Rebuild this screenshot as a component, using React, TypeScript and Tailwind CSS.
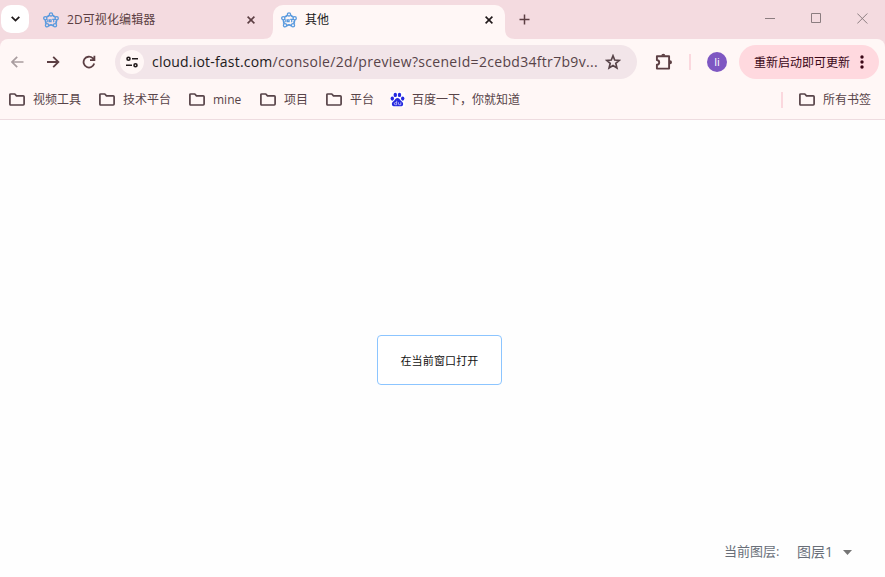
import React from "react";

const ui = "font-['Open_Sans','Noto_Sans_CJK_SC',sans-serif]";

function Star5Logo() {
  const pts = [[8, 2.4], [13.7, 6.2], [12, 13.3], [4, 13.3], [2.3, 6.2]];
  return (
    <svg className="h-4 w-4 shrink-0" viewBox="0 0 16 16" fill="none" stroke="#5a9ade" strokeWidth="1.3">
      <path d="M6.200 3.200Q5.500 4.800 3.500 4.800M9.800 3.200q.7 1.600 2.700 1.600M14 8.200q-1.400 1.500-.6 3.600M2 8.200q1.400 1.500.6 3.600M5.700 13.900Q8 12 10.300 13.900" strokeWidth="1.700" />
      {pts.map(([x, y]) => <circle key={x} cx={x} cy={y} r="1.600" />)}
      <path d="M4.800 7.200v3M6.400 7.800h1.700v1.900H6.400zM9.200 7.400h3M10.700 7.400v2.900" strokeWidth="1.200" />
    </svg>
  );
}

function Cross({ color }: { color: string }) {
  return (
    <svg className="h-2 w-2 shrink-0" viewBox="0 0 8 8" fill="none" stroke={color} strokeWidth="1.6">
      <path d="m.6.6 6.8 6.8M7.4.6.6 7.4" />
    </svg>
  );
}

function Folder() {
  return (
    <svg className="h-[14px] w-4 shrink-0" viewBox="0 0 16 14" fill="none" stroke="#574348" strokeWidth="1.7" strokeLinejoin="round">
      <path d="M.9 1.900q0-.9.900-.9h4l1.700 1.900h6.700q.9 0 .9.900v7.300q0 .9-.9.9H1.800q-.9 0-.9-.9z" />
    </svg>
  );
}

function Paw() {
  return (
    <svg className="-mt-px h-[15px] w-[15px] shrink-0 bg-white" viewBox="0 0 15 15" fill="#2529e0">
      <ellipse cx="2.300" cy="6.600" rx="1.700" ry="2.100" />
      <ellipse cx="5.300" cy="2.900" rx="1.700" ry="2.200" />
      <ellipse cx="9.500" cy="2.900" rx="1.700" ry="2.200" />
      <ellipse cx="12.700" cy="6.600" rx="1.700" ry="2.100" />
      <path d="M7.500 6.100c1.700 0 2.100 1.300 3.200 2.300 1.500 1.300 2.700 2.200 2.400 4-.3 1.900-2 2.100-3.500 1.900-1.400-.2-2.800-.2-4.200 0-1.500.2-3.200 0-3.500-1.900-.3-1.800.9-2.700 2.400-4C5.400 7.400 5.800 6.100 7.500 6.100z" />
      <path d="M6.700 8.800v3.900H5.300q-1 0-1-1t1-1h1.400M8.500 10.300v1.600q0 .8.800.8h1.500v-2.400" fill="none" stroke="#dfe0fb" strokeWidth=".7" />
    </svg>
  );
}

function Bookmark({ label, width }: { label: string; width: string }) {
  return (
    <div className="flex items-center gap-2">
      <Folder />
      <span className={width}>{label}</span>
    </div>
  );
}

function TabStrip() {
  return (
    <header className="flex h-[39px] items-start bg-[#f4dbe0] text-xs">
      <button className="ml-px mt-[5px] flex h-7 w-7 items-center justify-center rounded-[10px] bg-white">
        <svg className="h-[6px] w-[9px]" viewBox="0 0 9 6" fill="none" stroke="#1f1a1b" strokeWidth="1.8"><path d="m.7.8 3.800 3.800L8.300.8" /></svg>
      </button>
      <div className="ml-[14px] flex h-[39px] w-[213px] items-center pr-px text-[#5c3f43]">
        <Star5Logo />
        <span className="ml-2 flex-1 tracking-[0.1px]">2D可视化编辑器</span>
        <Cross color="#5c3f43" />
      </div>
      <svg className="mt-[29px] h-[10px] w-[17px]" viewBox="0 0 17 10" fill="#fff7f6"><path d="M7 10h10V0q0 10-10 10z" /></svg>
      <div className="mt-[5px] flex h-[34px] w-[232px] items-center rounded-t-[10px] bg-[#fff7f6] pb-[5px] pl-2 pr-3 text-[#211a1b]">
        <Star5Logo />
        <span className="ml-2 flex-1">其他</span>
        <Cross color="#211a1b" />
      </div>
      <svg className="mt-[29px] h-[10px] w-[10px]" viewBox="0 0 10 10" fill="#fff7f6"><path d="M0 0v10h10Q0 10 0 0z" /></svg>
      <svg className="ml-1 mt-[14px] h-[11px] w-[11px]" viewBox="0 0 11 11" stroke="#5c3f43" strokeWidth="1.5"><path d="M5.500.5v10M.5 5.500h10" /></svg>
      <div className="ml-auto mr-[17px] mt-3 flex h-3 items-center gap-[35px] text-[#8b7d80]">
        <svg className="h-[11px] w-[11px]" viewBox="0 0 11 11" stroke="currentColor"><path d="M0 5.500h10" /></svg>
        <svg className="h-[11px] w-[11px]" viewBox="0 0 11 11" fill="none" stroke="currentColor"><path d="M.5.5h9v9H.5z" /></svg>
        <svg className="h-[11px] w-[11px]" viewBox="0 0 11 11" stroke="currentColor"><path d="m.3.500 10 10M10.300.5l-10 10" /></svg>
      </div>
    </header>
  );
}

function Toolbar() {
  return (
    <div className="bg-[#f4dbe0]">
      <div className="flex h-[46px] items-center rounded-t-[8px] bg-[#fff7f6] pl-[10px] pr-[6px]">
        <svg className="ml-px h-3 w-[13px]" viewBox="0 0 13 12" fill="none" stroke="#a99d9f" strokeWidth="1.700"><path d="M12.500 6H1.200M6.200.8 1 6l5.200 5.200" /></svg>
        <svg className="ml-[23px] h-3 w-[13px]" viewBox="0 0 13 12" fill="none" stroke="#5c3f43" strokeWidth="1.800"><path d="M0 6h11.300M6.200.8 11.400 6l-5.200 5.200" /></svg>
        <svg className="ml-[22px] h-[14px] w-[14px]" viewBox="0 0 14 14" fill="none" stroke="#5c3f43" strokeWidth="1.800"><path d="M12.200 8.500A5.400 5.400 0 1 1 10.700 3.200l1.700 1.700M12.400.7v4.500H8" /></svg>
        <div className="ml-[19px] flex h-[34px] w-[522px] items-center rounded-full bg-[#f2e5e9] pl-[5px] pr-4">
          <span className="flex h-6 w-6 shrink-0 items-center justify-center rounded-full bg-[#fff7f6]">
            <svg className="h-3 w-3" viewBox="0 0 12 12" fill="none" stroke="#211a1b" strokeWidth="1.600"><circle cx="2.500" cy="2.700" r="1.500" /><path d="M6 2.700h6M0 9.300h6" /><circle cx="9.500" cy="9.300" r="1.500" /></svg>
          </span>
          <span className="mb-[2px] ml-2 flex-1 whitespace-nowrap text-[14px] tracking-[0.31px] text-[#574348]"><span className="tracking-[0.2px] text-[#211a1b]">cloud.iot-fast.com</span>/console/2d/preview?sceneId=2cebd34ftr7b9v...</span>
          <svg className="h-4 w-4 shrink-0" viewBox="0 0 16 16" fill="none" stroke="#574348" strokeWidth="1.700"><path d="m8 1.800 1.700 4.200 4.600.4-3.500 3 1.100 4.500L8 11.500l-3.900 2.400 1.100-4.500-3.500-3L6.300 6z" /></svg>
        </div>
        <svg className="ml-[18px] h-[18px] w-[18px]" viewBox="0 0 18 18" fill="none" stroke="#5c3f43" strokeWidth="1.900" strokeLinejoin="round">
          <path d="M1.900 3.200h12.200v12.400H1.900v-3.800q2.300-.4 2.300-2.400T1.900 7z" />
          <path d="M6.300 2.800a2 2 0 0 1 4 0zM15 7.300a2 2 0 0 1 0 4z" fill="#5c3f43" stroke="none" />
        </svg>
        <span className="ml-4 h-4 w-[2px] bg-[#fbd8de]" />
        <span className="ml-4 flex h-5 w-5 items-center justify-center rounded-full bg-[#7e57c2] text-[11px] text-white">li</span>
        <button className="ml-auto flex h-[34px] w-[140px] items-center rounded-full bg-[#ffd9df] pl-[15px] text-xs text-[#3a0716]">
          <span className="mt-[2px] w-24 whitespace-nowrap">重新启动即可更新</span>
          <svg className="ml-[10px] h-[14px] w-1" viewBox="0 0 4 14" fill="#3a0716"><circle cx="2" cy="2" r="1.700" /><circle cx="2" cy="7" r="1.700" /><circle cx="2" cy="12" r="1.700" /></svg>
        </button>
      </div>
    </div>
  );
}

export default function App() {
  return (
    <div className={`${ui} flex h-[577px] w-[885px] flex-col overflow-hidden bg-[#fefefe]`}>
      <TabStrip />
      <Toolbar />
      <nav className="flex h-[35px] items-center gap-[18px] whitespace-nowrap border-b border-[#eedce0] bg-[#fff7f6] pb-[5px] pl-[9px] pr-[14px] text-xs text-[#574348]">
        <Bookmark label="视频工具" width="w-12" />
        <Bookmark label="技术平台" width="w-12" />
        <Bookmark label="mine" width="w-[29px]" />
        <Bookmark label="项目" width="w-6" />
        <Bookmark label="平台" width="w-6" />
        <div className="-ml-[2px] flex items-center gap-[7px]">
          <Paw />
          <span>百度一下，你就知道</span>
        </div>
        <div className="ml-auto flex items-center gap-4">
          <span className="h-4 w-[2px] bg-[#fbd8de]" />
          <Bookmark label="所有书签" width="w-12" />
        </div>
      </nav>
      <main className="flex min-h-0 flex-1 flex-col">
        <button className="ml-[377px] mt-[215px] h-[50px] w-[125px] rounded-[4px] border border-[#8cc5ff] bg-white pt-[2px] text-[11px] leading-4 text-[#111]">
          <span className="tracking-[0.15px]">在当前窗口打开</span>
        </button>
        <div className="mb-[15px] ml-[724px] mt-auto flex h-5 items-center whitespace-nowrap text-[#686e78]">
          <span className="w-[73px] text-[13px]">当前图层:</span>
          <span className="mb-[2px] w-[46px] text-[14px]">图层1</span>
          <svg className="h-[5px] w-[9px]" viewBox="0 0 9 5" fill="#757575"><path d="M0 0h9L4.500 5z" /></svg>
        </div>
      </main>
    </div>
  );
}
